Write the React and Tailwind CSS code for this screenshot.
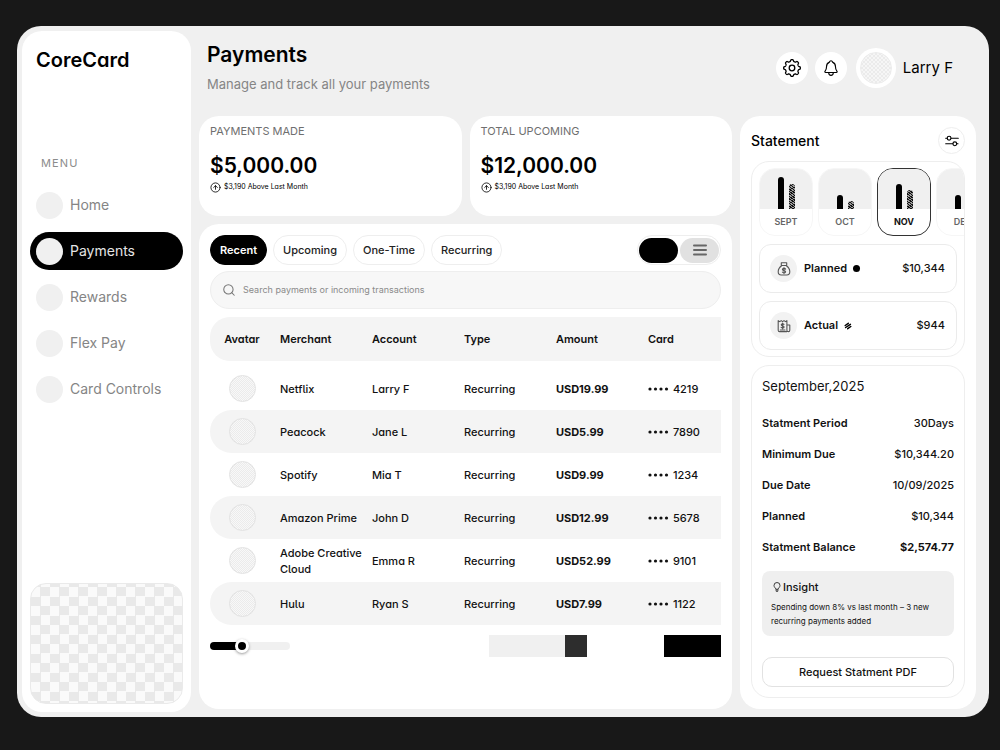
import { useState } from 'react';
import { CircleArrowUp, Search } from 'lucide-react';
import { IoNotificationsOutline } from 'react-icons/io5';

const menu = ['Home', 'Payments', 'Rewards', 'Flex Pay', 'Card Controls'];

const stats = [
  { label: 'PAYMENTS MADE', value: '$5,000.00', note: '$3,190 Above Last Month' },
  { label: 'TOTAL UPCOMING', value: '$12,000.00', note: '$3,190 Above Last Month' },
];

const tabs = ['Recent', 'Upcoming', 'One-Time', 'Recurring'];

const payments = [
  { merchant: 'Netflix', account: 'Larry F', amount: 'USD19.99', card: '4219' },
  { merchant: 'Peacock', account: 'Jane L', amount: 'USD5.99', card: '7890' },
  { merchant: 'Spotify', account: 'Mia T', amount: 'USD9.99', card: '1234' },
  { merchant: 'Amazon Prime', account: 'John D', amount: 'USD12.99', card: '5678' },
  { merchant: 'Adobe Creative Cloud', account: 'Emma R', amount: 'USD52.99', card: '9101' },
  { merchant: 'Hulu', account: 'Ryan S', amount: 'USD7.99', card: '1122' },
];

// bar heights in px
const months = [
  { name: 'SEPT', planned: 32, actual: 25 },
  { name: 'OCT', planned: 14, actual: 8 },
  { name: 'NOV', planned: 25, actual: 19 },
  { name: 'DEC', planned: 14, actual: 10 },
];

const details = [
  { label: 'Statment Period', value: '30Days' },
  { label: 'Minimum Due', value: '$10,344.20' },
  { label: 'Due Date', value: '10/09/2025' },
  { label: 'Planned', value: '$10,344' },
  { label: 'Statment Balance', value: '$2,574.77', strong: true },
];

// eight soft teeth, the first one pointing up
const gearPoints = Array.from({ length: 128 }, (_, i) => {
  const a = (i / 128) * Math.PI * 2;
  const r = 7.5 + 0.85 * Math.tanh(2.2 * Math.cos(8 * a));
  return `${(10 + r * Math.sin(a)).toFixed(2)},${(10 - r * Math.cos(a)).toFixed(2)}`;
}).join(' ');

const GearIcon = () => (
  <svg width="20" height="20" viewBox="0 0 20 20" fill="none" stroke="currentColor" strokeWidth="1.3" strokeLinejoin="round">
    <polygon points={gearPoints} />
    <circle cx="10" cy="10" r="2.8" />
  </svg>
);

const SlidersIcon = () => (
  <svg width="14" height="12" viewBox="0 0 14 12" fill="none" stroke="currentColor" strokeWidth="1.1" strokeLinecap="round">
    <path d="M.7 3.2h1.5M6 3.2h7.3M.7 8.8h7.2M11.7 8.8h1.3" />
    <circle cx="4.1" cy="3.2" r="1.9" />
    <circle cx="9.8" cy="8.8" r="1.9" />
  </svg>
);

const MoneyBagIcon = () => (
  <svg width="14" height="14" viewBox="0 0 14 14" fill="none" stroke="currentColor" strokeWidth="1.1" strokeLinecap="round" strokeLinejoin="round">
    <path d="M4.3.8h5.4v2.7H4.3zM4.6 3.7C2.400 5.200 1.200 7.400 1.200 9.800c0 2.200 1 3.200 3 3.200h5.600c2 0 3-1 3-3.200 0-2.400-1.200-4.600-3.400-6.100" />
    <path d="M8.600 7.100c-.3-.5-.9-.7-1.600-.7-.9 0-1.600.4-1.600 1.100 0 1.600 3.200.7 3.200 2.300 0 .7-.7 1.100-1.600 1.100-.8 0-1.400-.3-1.600-.8M7 5.600v6" />
  </svg>
);

const ReceiptIcon = () => (
  <svg width="14" height="14" viewBox="0 0 14 14" fill="none" stroke="currentColor" strokeWidth="1.1" strokeLinecap="round" strokeLinejoin="round">
    <path d="M9.8 12.6H2.6c-.9 0-1.4-.5-1.4-1.4V1.6l1.6 1 1.4-1 1.4 1 1.4-1 1.4 1 1.5-1v9.6M9.9 6h2.9v5.2c0 .9-.6 1.4-1.4 1.4s-1.5-.5-1.5-1.4" />
    <path d="M7 5.4c-.3-.4-.8-.6-1.4-.6-.8 0-1.4.4-1.4 1 0 1.5 2.9.7 2.9 2.2 0 .6-.6 1-1.5 1-.7 0-1.3-.3-1.5-.7M5.6 4v5.8M3.2 11h4.8" />
  </svg>
);

const BulbIcon = () => (
  <svg width="8" height="10" viewBox="0 0 8 10" fill="none" stroke="currentColor" strokeWidth=".8" strokeLinecap="round">
    <path d="M2.7 6.8C2.6 5.9 1 5.2 1 3.5a3 3 0 0 1 6 0c0 1.7-1.6 2.4-1.7 3.3zM2.8 8.1h2.4M3.3 9.3h1.4" />
  </svg>
);

const StripedDot = () => (
  <svg width="8" height="8" viewBox="0 0 8 8" className="ml-1.5" stroke="#000" strokeLinecap="round" aria-hidden="true">
    <path strokeWidth="1.5" d="M1.200 3.500 4.300 1.300M1.600 5.500 6.400 2.300M3.700 6.700 6.800 4.500" />
  </svg>
);

const Sidebar = () => (
  <aside className="flex w-[169px] shrink-0 flex-col rounded-[20px] bg-white px-2 pt-[15px] pb-2">
    <div className="px-1.5 text-xl leading-7 font-semibold [font-feature-settings:'cv11']">CoreCard</div>
    <p className="mt-[81px] px-[11px] text-[11px] leading-4 tracking-widest text-[#8c8c8c]">MENU</p>
    <nav className="mt-[15px] flex flex-col gap-2">
      {menu.map((item) => (
        <a
          key={item}
          href="#"
          className={`flex h-[38px] items-center gap-[7px] rounded-full px-1.5 text-sm ${
            item === 'Payments' ? 'bg-black text-[#e4e4e4]' : 'text-[#858585]'
          }`}
        >
          <span className="size-[27px] rounded-full bg-[#f0f0f0]" />
          {item}
        </a>
      ))}
    </nav>
    <div className="mt-auto h-[121px] rounded-2xl border border-[#eaeaea] bg-[conic-gradient(#e9e9e9_25%,#fafafa_0_50%,#e9e9e9_0_75%,#fafafa_0)] bg-[length:19px_19px] bg-[position:0_3px]" />
  </aside>
);

const Header = () => (
  <header className="flex h-[90px] items-start justify-between pr-[23px] pl-2">
    <div className="pt-[15px]">
      <h1 className="text-[21px] leading-7 font-semibold">Payments</h1>
      <p className="mt-[5px] text-[13px] leading-5 text-[#858585]">Manage and track all your payments</p>
    </div>
    <div className="flex items-center pt-[22px]">
      <button type="button" aria-label="Settings" className="flex size-8 items-center justify-center rounded-full bg-white">
        <GearIcon />
      </button>
      <button type="button" aria-label="Notifications" className="ml-[7px] flex size-8 items-center justify-center rounded-full bg-white">
        <IoNotificationsOutline size={18} />
      </button>
      <div className="ml-[9px] size-10 rounded-full bg-white p-1">
        <div className="size-8 rounded-full border border-[#ececec] bg-[conic-gradient(#ebebeb_25%,#f6f6f6_0_50%,#ebebeb_0_75%,#f6f6f6_0)] bg-[length:4px_4px]" />
      </div>
      <span className="ml-[7px] text-[15px]">Larry F</span>
    </div>
  </header>
);

const StatCard = ({ label, value, note }) => (
  <section className="h-[100px] rounded-[20px] bg-white px-[11px] pt-[7px]">
    <h2 className="text-[11px] leading-4 text-[#6f6f6f]">{label}</h2>
    <p className="mt-[13px] text-[21px] leading-7 font-semibold">{value}</p>
    <p className="mt-px flex items-center gap-[3px] text-[7px] leading-3 [font-feature-settings:'cv11']">
      <CircleArrowUp size={11} strokeWidth={1.8} />
      {note}
    </p>
  </section>
);

const PaymentsTable = () => (
  <table className="mt-2 w-full table-fixed border-separate border-spacing-0 text-left text-[11px] leading-4 font-medium text-[#111] [font-feature-settings:'cv11','cv05']">
    <thead>
      <tr className="h-11 bg-[#f4f4f4]">
        <th className="w-[62px] rounded-l-[20px] pl-[2px] text-center font-semibold">Avatar</th>
        <th className="w-[18%] pl-2 font-semibold">Merchant</th>
        <th className="w-[18%] pl-2 font-semibold">Account</th>
        <th className="w-[18%] pl-2 font-semibold">Type</th>
        <th className="w-[18%] pl-2 font-semibold">Amount</th>
        <th className="pl-2 font-semibold">Card</th>
      </tr>
    </thead>
    <tbody className="before:block before:h-[6px]">
      {payments.map((row) => (
        <tr key={row.merchant} className="h-[43px] even:bg-[#f4f4f4]">
          <td className="rounded-l-[22px] pl-[2px]">
            <div className="mx-auto size-[27px] rounded-full border border-[#e2e2e2] bg-[conic-gradient(#ebebeb_25%,#f8f8f8_0_50%,#ebebeb_0_75%,#f8f8f8_0)] bg-[length:2px_2px]" />
          </td>
          <td className="pl-2">{row.merchant}</td>
          <td className="pl-2">{row.account}</td>
          <td className="pl-2">Recurring</td>
          <td className="pl-2 font-bold">{row.amount}</td>
          <td className="pl-2">
            <div className="flex items-center gap-1">
              <svg width="21" height="4" viewBox="0 0 21 4" fill="currentColor" role="img" aria-label="Card ending in">
                <circle cx="2" cy="2" r="1.6" />
                <circle cx="7.5" cy="2" r="1.6" />
                <circle cx="13" cy="2" r="1.6" />
                <circle cx="18.5" cy="2" r="1.6" />
              </svg>
              {row.card}
            </div>
          </td>
        </tr>
      ))}
    </tbody>
  </table>
);

const PaymentsPanel = () => {
  const [tab, setTab] = useState('Recent');
  const [scroll, setScroll] = useState(38);

  return (
    <section className="flex-1 rounded-[20px] bg-white p-[11px]">
      <div className="flex items-center justify-between">
        <div className="flex gap-1.5">
          {tabs.map((name) => (
            <button
              key={name}
              type="button"
              onClick={() => setTab(name)}
              className={`h-[30px] rounded-full border px-[9px] text-[11px] ${
                tab === name ? 'border-black bg-black font-semibold text-white' : 'border-[#eee] bg-white font-medium text-[#222]'
              }`}
            >
              {name}
            </button>
          ))}
        </div>
        <div className="flex h-[30px] items-center gap-0.5 rounded-full border border-[#eee] px-px">
          <button type="button" aria-label="Card view" className="h-[25px] w-[39px] rounded-full bg-black" />
          <button type="button" aria-label="List view" className="flex h-[25px] w-[39px] items-center justify-center rounded-full bg-[#e1e1e1] text-[#666]">
            <svg width="14" height="12" viewBox="0 0 14 12" stroke="currentColor" strokeWidth="2" strokeLinecap="round">
              <path d="M1 1.500h12M1 6h12M1 10.500h12" />
            </svg>
          </button>
        </div>
      </div>

      <label className="mt-1.5 flex h-[38px] items-center gap-[7px] rounded-full border border-[#eee] bg-[#f7f7f7] px-[11px]">
        <Search size={14} strokeWidth={1.8} className="text-[#777]" />
        <input
          type="search"
          aria-label="Search payments"
          placeholder="Search payments or incoming transactions"
          className="min-w-0 flex-1 bg-transparent text-[9px] outline-none placeholder:text-[#8a8a8a]"
        />
      </label>

      <PaymentsTable />

      <div className="mt-[10px] flex h-[22px] items-center">
        <input
          type="range"
          aria-label="Scroll table"
          value={scroll}
          onChange={(e) => setScroll(Number(e.target.value))}
          style={{ backgroundImage: `linear-gradient(to right, #000 ${scroll}%, #f0f0f0 ${scroll}%)` }}
          className="h-2 w-20 appearance-none rounded-full [&::-webkit-slider-thumb]:size-[14px] [&::-webkit-slider-thumb]:appearance-none [&::-webkit-slider-thumb]:rounded-full [&::-webkit-slider-thumb]:border-[3px] [&::-webkit-slider-thumb]:border-solid [&::-webkit-slider-thumb]:border-white [&::-webkit-slider-thumb]:bg-black [&::-webkit-slider-thumb]:shadow-[0_1px_3px_rgba(0,0,0,0.4)]"
        />
        <div className="ml-auto flex h-full">
          <div className="w-[76px] bg-[#f0f0f0]" />
          <button type="button" aria-label="Page" className="w-[22px] bg-[#2d2d2d]" />
        </div>
        <button type="button" aria-label="Next" className="ml-[77px] h-full w-[57px] bg-black" />
      </div>
    </section>
  );
};

const MonthCard = ({ month, active }) => (
  <button
    type="button"
    className={`h-[68px] w-[54px] shrink-0 overflow-hidden rounded-2xl border ${active ? 'border-[#333]' : 'border-[#f6f6f6]'}`}
  >
    <div className="flex h-10 items-end justify-center gap-[5px] bg-[#f0f0f0]">
      <div className="w-1.5 rounded-t-full bg-black" style={{ height: month.planned }} />
      <div
        className="w-1.5 rounded-t-full bg-[repeating-linear-gradient(35deg,#111_0_1px,#999_1px_2px)]"
        style={{ height: month.actual }}
      />
    </div>
    <div className={`flex h-[26px] items-center justify-center text-[9px] ${active ? 'font-bold text-[#111]' : 'font-semibold text-[#666]'}`}>
      {month.name}
    </div>
  </button>
);

const TotalRow = ({ icon, label, marker, value }) => (
  <div className="mr-[7px] flex h-[49px] items-center rounded-xl border border-[#ebebeb] pr-[11px] pl-2.5 text-[11px] text-[#111]">
    <span className="flex size-[27px] items-center justify-center rounded-full bg-[#f2f2f2] text-[#555]">{icon}</span>
    <span className="ml-[7px] font-semibold">{label}</span>
    {marker}
    <span className="ml-auto font-medium">{value}</span>
  </div>
);

const StatementPanel = () => (
  <aside className="flex w-[236px] shrink-0 flex-col rounded-[20px] bg-white p-[11px]">
    <div className="flex h-[27px] items-center justify-between">
      <h2 className="text-sm font-medium">Statement</h2>
      <button type="button" aria-label="Filter statement" className="flex size-[27px] items-center justify-center rounded-full border border-[#eee]">
        <SlidersIcon />
      </button>
    </div>

    <section className="mt-[7px] flex flex-col gap-2 overflow-hidden rounded-[18px] border border-[#eee] py-1.5 pl-[7px]">
      <div className="flex gap-[5px] overflow-hidden">
        {months.map((month) => (
          <MonthCard key={month.name} month={month} active={month.name === 'NOV'} />
        ))}
      </div>
      <TotalRow
        icon={<MoneyBagIcon />}
        label="Planned"
        value="$10,344"
        marker={<span className="ml-1.5 size-[7px] rounded-full bg-black" />}
      />
      <TotalRow icon={<ReceiptIcon />} label="Actual" value="$944" marker={<StripedDot />} />
    </section>

    <section className="mt-2 flex flex-1 flex-col rounded-[18px] border border-[#eee] p-2.5">
      <h3 className="text-[13px] leading-5 text-[#111]">September,2025</h3>
      <dl className="mt-3 text-[11px] text-[#111]">
        {details.map((d) => (
          <div key={d.label} className="flex h-[31px] items-center justify-between">
            <dt className="font-semibold">{d.label}</dt>
            <dd className={d.strong ? 'font-bold' : 'font-medium'}>{d.value}</dd>
          </div>
        ))}
      </dl>
      <div className="mt-2 rounded-lg bg-[#efefef] px-[9px] py-2 text-[#111]">
        <h4 className="flex items-center gap-0.5 pl-0.5 text-[11px] leading-4 font-medium">
          <BulbIcon />
          Insight
        </h4>
        <p className="mt-[5px] text-[8px] leading-[14px]">Spending down 8% vs last month – 3 new recurring payments added</p>
      </div>
      <button type="button" className="mt-auto h-[30px] shrink-0 rounded-[10px] border border-[#e2e2e2] text-[11px] font-medium text-[#111]">
        Request Statment PDF
      </button>
    </section>
  </aside>
);

const App = () => (
  <div className="flex min-h-screen bg-[#181818] pt-[26px] pr-[11px] pb-[33px] pl-[17px] font-['Inter',sans-serif] text-black">
    <div className="flex flex-1 gap-2 rounded-[24px] bg-[#f0f0f0] pr-[13px] pl-[5px]">
      <div className="flex pt-[5px] pb-[5px]">
        <Sidebar />
      </div>
      <main className="flex min-w-0 flex-1 flex-col pb-2">
        <Header />
        <div className="flex flex-1 gap-2">
          <div className="flex min-w-0 flex-1 flex-col gap-2">
            <div className="grid grid-cols-2 gap-2">
              {stats.map((stat) => (
                <StatCard key={stat.label} {...stat} />
              ))}
            </div>
            <PaymentsPanel />
          </div>
          <StatementPanel />
        </div>
      </main>
    </div>
  </div>
);

export default App;
